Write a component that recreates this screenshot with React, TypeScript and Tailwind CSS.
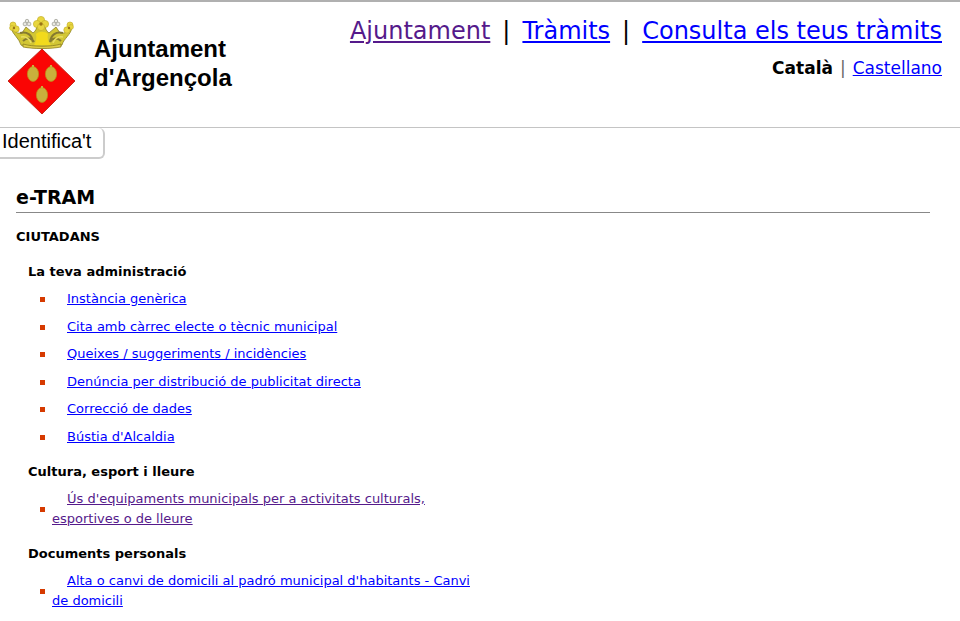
type Item = { label: string; visited?: boolean };
type Group = { title: string; items: Item[] };

const groups: Group[] = [
  {
    title: 'La teva administració',
    items: [
      { label: 'Instància genèrica' },
      { label: 'Cita amb càrrec electe o tècnic municipal' },
      { label: 'Queixes / suggeriments / incidències' },
      { label: 'Denúncia per distribució de publicitat directa' },
      { label: 'Correcció de dades' },
      { label: "Bústia d'Alcaldia" },
    ],
  },
  {
    title: 'Cultura, esport i lleure',
    items: [
      { label: "Ús d'equipaments municipals per a activitats culturals, esportives o de lleure", visited: true },
    ],
  },
  {
    title: 'Documents personals',
    items: [{ label: "Alta o canvi de domicili al padró municipal d'habitants - Canvi de domicili" }],
  },
];

function Crest() {
  return (
    <svg viewBox="0 0 72 100" className="h-[100px] w-[72px] shrink-0" role="img" aria-label="Escut d'Argençola">
      <path d="M36 33 69 65 36 98 2 65Z" fill="#fa0504" stroke="#c62a1c" strokeWidth="1" />
      <g fill="#c9b03c" stroke="#c08a14" strokeWidth="0.8">
        <ellipse cx="27" cy="58" rx="5.6" ry="7.4" />
        <ellipse cx="45" cy="58" rx="5.6" ry="7.4" />
        <ellipse cx="36" cy="79" rx="5.6" ry="7.4" />
      </g>
      <path d="M26 50h2M44 50h2M35 71h2" stroke="#c9b03c" strokeWidth="2" />
      <path d="M5 12c3 4 7 6 11 5l4-6 7 6c3-2 4-5 4-9h8c0 4 1 7 4 9l7-6 4 6c5 1 9-2 12-6-1 8-8 11-10 18-6 4-36 4-41 0C13 22 7 19 5 12Z" fill="#d2c634" stroke="#8b8024" strokeWidth="0.8" />
      <path d="M14 17c7-2 12 2 13 9M57 17c-7-2-12 2-13 9M17 25c4-4 9-3 11 1M55 25c-4-4-9-3-11 1" stroke="#857a30" strokeWidth="2" fill="none" />
      <path d="M15 21c5-1 8 1 10 6M57 21c-5-1-8 1-10 6" stroke="#e9dd62" strokeWidth="1.5" fill="none" />
      <path d="M30 18c1 4 0 8-2 11h17c-3-3-4-7-3-11-3-3-9-3-12 0Z" fill="#f2da1c" />
      <path d="M17 28c10 3 28 3 38 0v3c-10 2-28 2-38 0Z" fill="#e0cf48" stroke="#827619" strokeWidth="0.7" />
      <g fill="#e8d640" stroke="#c6b22c" strokeWidth="0.7">
        <circle cx="35" cy="4" r="3.6" /><circle cx="31" cy="8" r="3.6" /><circle cx="39" cy="8" r="3.6" /><circle cx="35" cy="11" r="3.6" />
        <circle cx="7" cy="9" r="3" /><circle cx="6" cy="12" r="2.4" /><circle cx="10" cy="13" r="3.2" />
        <circle cx="64" cy="9" r="3" /><circle cx="65" cy="11" r="2.4" /><circle cx="61" cy="14" r="3.2" />
      </g>
      <g fill="#9a7415">
        <circle cx="35" cy="8" r="1.7" /><circle cx="8" cy="12" r="1.2" /><circle cx="63" cy="12" r="1.2" />
      </g>
      <g fill="#e9e9e2" stroke="#a3a39a" strokeWidth="0.8">
        <circle cx="21" cy="5" r="1.7" /><circle cx="19" cy="8" r="1.9" /><circle cx="23" cy="8" r="1.9" />
        <circle cx="50" cy="5" r="1.7" /><circle cx="48" cy="8" r="1.9" /><circle cx="52" cy="8" r="1.9" />
      </g>
    </svg>
  );
}

export default function App() {
  return (
    <div className="min-h-screen bg-white font-['DejaVu_Sans',Verdana,sans-serif] text-black">
      <header className="flex items-start justify-between border-t-2 border-b border-t-[#b0b0b0] border-b-[#c4c4c4] pt-3 pr-[18px] pb-[11px] pl-[6px]">
        <div className="flex items-start gap-4">
          <div className="pt-[2px]">
            <Crest />
          </div>
          <p className="pt-5 font-['Liberation_Sans',Arial,sans-serif] text-[24px] leading-[29px] font-bold">
            Ajuntament
            <br />
            d'Argençola
          </p>
        </div>
        <div className="text-right">
          <nav className="flex justify-end gap-3 text-[24px] leading-[34px]">
            <a href="#ajuntament" className="text-[#551a8b] underline">Ajuntament</a>
            <span>|</span>
            <a href="#tramits" className="text-[#0000ff] underline">Tràmits</a>
            <span>|</span>
            <a href="#consulta" className="text-[#0000ff] underline">Consulta els teus tràmits</a>
          </nav>
          <p className="flex justify-end gap-[7px] pt-2 text-[17px] leading-6">
            <strong>Català</strong>
            <span className="text-[#666666]">|</span>
            <a href="#castellano" className="text-[#0000ff] underline">Castellano</a>
          </p>
        </div>
      </header>
      <button
        type="button"
        className="block rounded-r-md border-r-2 border-b-2 border-[#cccccc] bg-white pt-px pr-3 pb-1 pl-[2px] font-['Liberation_Sans',Arial,sans-serif] text-[20px] leading-6"
      >
        Identifica't
      </button>
      <main className="pt-[26px] pr-[30px] pb-3 pl-4">
        <h1 className="border-b border-[#888888] pb-[3px] text-[19px] leading-6 font-bold">e-TRAM</h1>
        <h2 className="pt-[14px] text-[13px] leading-5 font-bold">CIUTADANS</h2>
        <div className="pl-3">
          {groups.map((group) => (
            <section key={group.title} className="pt-[11px] first:pt-[15px]">
              <h3 className="text-[13px] leading-5 font-bold">{group.title}</h3>
              <ul className="pt-1">
                {group.items.map((item) => (
                  <li key={item.label} className="flex max-w-[460px] items-center gap-[7px] pt-[3px] pb-1 pl-3 even:pt-1">
                    <span className="size-[5px] shrink-0 bg-[#d63a00]" />
                    <span className="indent-[15px] text-[13px] leading-5">
                      <a href="#tramit" className={item.visited ? 'text-[#551a8b] underline' : 'text-[#0000ff] underline'}>
                        {item.label}
                      </a>
                    </span>
                  </li>
                ))}
              </ul>
            </section>
          ))}
        </div>
      </main>
    </div>
  );
}
